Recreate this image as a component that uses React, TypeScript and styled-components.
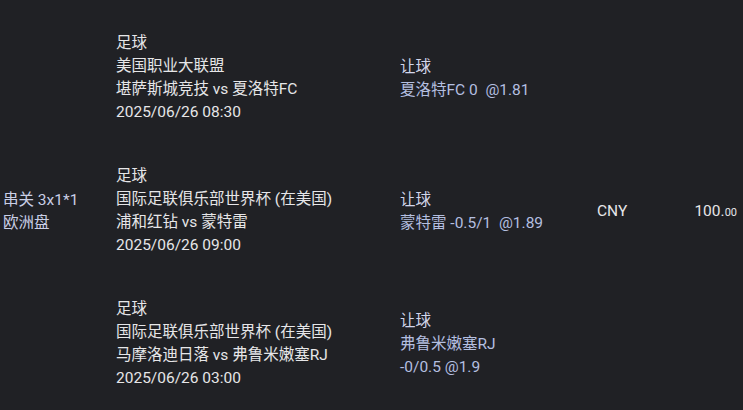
import React from "react";
import styled, { createGlobalStyle } from "styled-components";

const Global = createGlobalStyle`
  html, body { margin: 0; padding: 0; background: #202125; }
  body { font-family: Roboto, "Noto Sans CJK SC", sans-serif; }
`;

const Table = styled.div`
  display: grid;
  grid-template-columns: 116px 284px 197px 1fr auto;
  grid-template-rows: repeat(3, 133px);
  padding-top: 12px;
  font-size: 15.5px;
  line-height: 23px;
  color: #e6e6e8;
`;

const TypeCell = styled.div`
  grid-column: 1;
  grid-row: 1 / 4;
  align-self: center;
  padding-left: 3px;
  color: #c9cfe6;
`;

const MatchCell = styled.div<{ $row: number }>`
  grid-column: 2;
  grid-row: ${(p) => p.$row};
  padding: 20px 0;
  display: flex;
  flex-direction: column;
`;

const BetCell = styled.div<{ $row: number }>`
  grid-column: 3;
  grid-row: ${(p) => p.$row};
  align-self: center;
  display: flex;
  flex-direction: column;
  color: #b4bfe0;
`;

const BetLabel = styled.span`
  color: #d2d6ea;
`;

const BetLine = styled.span`
  white-space: pre;
`;

const Currency = styled.div`
  grid-column: 4;
  grid-row: 1 / 4;
  align-self: center;
  color: #e6e6e8;
`;

const Amount = styled.div`
  grid-column: 5;
  grid-row: 1 / 4;
  align-self: center;
  padding-right: 6px;
  color: #e6e6e8;
`;

const Cents = styled.span`
  font-size: 11px;
`;

const rows = [
  {
    league: "美国职业大联盟",
    teams: "堪萨斯城竞技 vs 夏洛特FC",
    date: "2025/06/26 08:30",
    bet: ["夏洛特FC 0  @1.81"],
  },
  {
    league: "国际足联俱乐部世界杯 (在美国)",
    teams: "浦和红钻 vs 蒙特雷",
    date: "2025/06/26 09:00",
    bet: ["蒙特雷 -0.5/1  @1.89"],
  },
  {
    league: "国际足联俱乐部世界杯 (在美国)",
    teams: "马摩洛迪日落 vs 弗鲁米嫩塞RJ",
    date: "2025/06/26 03:00",
    bet: ["弗鲁米嫩塞RJ", "-0/0.5 @1.9"],
  },
];

export default function App() {
  return (
    <>
      <Global />
      <Table>
        <TypeCell>
          <div>串关 3x1*1</div>
          <div>欧洲盘</div>
        </TypeCell>
        {rows.map((r, i) => (
          <React.Fragment key={i}>
            <MatchCell $row={i + 1}>
              <span>足球</span>
              <span>{r.league}</span>
              <span>{r.teams}</span>
              <span>{r.date}</span>
            </MatchCell>
            <BetCell $row={i + 1}>
              <BetLabel>让球</BetLabel>
              {r.bet.map((b, j) => (
                <BetLine key={j}>{b}</BetLine>
              ))}
            </BetCell>
          </React.Fragment>
        ))}
        <Currency>CNY</Currency>
        <Amount>
          100.<Cents>00</Cents>
        </Amount>
      </Table>
    </>
  );
}
